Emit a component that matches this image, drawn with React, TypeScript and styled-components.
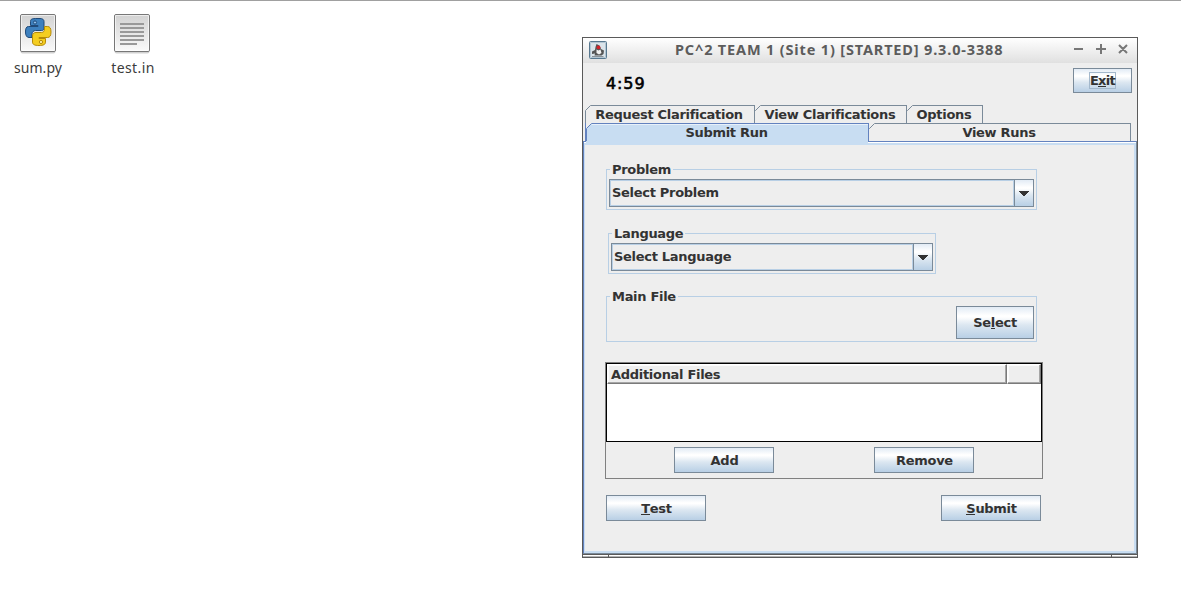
import React from 'react';
import styled, { createGlobalStyle } from 'styled-components';

const SLATE = '#7a8a99';
const BLUE = '#6382bf';
const PALE = '#c8ddf2';
const LINE = '#b8cfe5';
const PANEL = '#eeeeee';

const GlobalStyle = createGlobalStyle`
  * { box-sizing: border-box; }
  body {
    margin: 0;
    background: #fff;
    overflow: hidden;
    font: bold 13px/16px "DejaVu Sans", sans-serif;
    letter-spacing: -0.3px;
    color: #333;
  }
`;

const Desktop = styled.main`
  position: relative;
  width: 1181px;
  height: 605px;
  border-top: 1px solid #a0a0a0;
`;

const Files = styled.div`
  display: flex;
  padding-top: 12px;
`;

const FileItem = styled.div<{ $width: number }>`
  display: flex;
  flex-direction: column;
  align-items: center;
  width: ${(p) => p.$width}px;
  font: 14px/18px "Noto Sans", sans-serif;
  color: #3c3c3c;
`;

const FileIcon = styled.svg`
  display: block;
  width: 38px;
  height: 42px;
  margin-bottom: 4px;
`;

const FileName = styled.span<{ $track: number; $indent?: number }>`
  padding-left: ${(p) => p.$indent ?? 0}px;
  letter-spacing: ${(p) => p.$track}px;
  white-space: nowrap;
`;

const Frame = styled.section`
  position: absolute;
  left: 582px;
  top: 36px;
  width: 556px;
  height: 521px;
  display: flex;
  flex-direction: column;
  border: 1px solid #5a5a5a;
  background: ${PANEL};
`;

const TitleBar = styled.header`
  display: flex;
  align-items: flex-start;
  height: 25px;
  padding: 3px 8px 0 6px;
  background: linear-gradient(#fff, #e0e0e0);
`;

const Title = styled.h1`
  flex: 1;
  margin: 0;
  padding-left: 68px;
  font: bold 14.5px/16px "Noto Sans", sans-serif;
  letter-spacing: 0.84px;
  color: #5c5c5c;
  white-space: nowrap;
`;

const Controls = styled.svg`
  display: block;
  width: 56px;
  height: 12px;
  flex: none;
  margin-top: 2px;
`;

const StatusRow = styled.div`
  display: flex;
  justify-content: space-between;
  align-items: flex-start;
  height: 42px;
  padding: 5px 5px 0 23px;
`;

const Clock = styled.div`
  padding-top: 6px;
  font-size: 16px;
  font-weight: normal;
  line-height: 20px;
  letter-spacing: 0.9px;
  -webkit-text-stroke: 0.6px #000;
  color: #000;
`;

const Button = styled.button<{ $w: number; $h: number }>`
  display: flex;
  align-items: center;
  justify-content: center;
  width: ${(p) => p.$w}px;
  height: ${(p) => p.$h}px;
  padding: 0;
  border: 1px solid ${SLATE};
  border-radius: 0;
  background: linear-gradient(#e2ebf5 0%, #fff 28%, #fff 32%, #dce7f1 58%, #b8cfe5 100%);
  font: inherit;
  letter-spacing: inherit;
  color: #333;
`;

const ActionButton = styled(Button).attrs({ $w: 100, $h: 26 })`
  padding: 2px 0 0 1px;
`;

const Mnemonic = styled.span`
  display: inline-block;
  height: 13px;
  box-shadow: 0 1px 0 #333;
`;

const FocusRing = styled.span`
  display: flex;
  justify-content: center;
  width: 27px;
  height: 17px;
  line-height: 15px;
  border: 1px solid #a3b8cc;
  letter-spacing: -0.7px;
`;

const TabRow = styled.div<{ $inset: number }>`
  display: flex;
  height: 18px;
  padding-left: ${(p) => p.$inset}px;
`;

const TabBox = styled.div<{ $w: number; $active?: boolean; $first?: boolean }>`
  position: relative;
  width: ${(p) => p.$w}px;
  height: 18px;
  padding-right: ${(p) => (p.$first ? 2 : 1)}px;
  line-height: 17px;
  text-align: center;
  white-space: nowrap;
  border-top: 1px solid ${(p) => (p.$active ? BLUE : SLATE)};
  border-left: ${(p) => (p.$first ? `1px solid ${p.$active ? BLUE : SLATE}` : 'none')};
  border-right: 1px solid ${(p) => (p.$active ? BLUE : SLATE)};
  background: ${(p) => (p.$active ? PALE : PANEL)};
  box-shadow: ${(p) => (p.$active ? 'inset 0 1px 0 #e8f1fa' : 'none')};
`;

const Corner = styled.svg<{ $x: number }>`
  position: absolute;
  left: ${(p) => p.$x}px;
  top: -1px;
  width: 6px;
  height: 6px;
`;

const SecondRow = styled(TabRow)`
  background: linear-gradient(${BLUE}, ${BLUE}) 2px 0 / 1px 18px no-repeat;
`;

const PaneEdge = styled.div`
  display: flex;
  height: 413px;
  padding-top: 1px;
  border: 1px solid ${BLUE};
  border-right-color: ${SLATE};
  border-bottom-color: ${SLATE};
  background: #fff;
`;

const Pane = styled.div`
  flex: 1;
  display: flex;
  flex-direction: column;
  align-items: flex-start;
  padding: 24px 0 0 20px;
  border: solid ${PALE};
  border-width: 2px 2px 2px 1px;
  background: ${PANEL};
`;

const ActiveJoin = styled.div`
  position: absolute;
  left: -1px;
  top: 17px;
  width: 282px;
  height: 3px;
  background: ${PALE};
`;

const Group = styled.fieldset<{ $w: number; $h: number; $left: number; $gap: number }>`
  position: relative;
  display: flex;
  justify-content: flex-end;
  align-items: flex-start;
  width: ${(p) => p.$w}px;
  height: ${(p) => p.$h}px;
  margin: 0 0 ${(p) => p.$gap}px ${(p) => p.$left}px;
  padding: 9px 2px 2px;
  border: 1px solid ${LINE};
`;

const Legend = styled.span`
  position: absolute;
  left: 3px;
  top: -8px;
  padding: 0 2px;
  background: ${PANEL};
`;

const Combo = styled.div`
  display: flex;
  width: 100%;
  height: 28px;
  border: 1px solid ${SLATE};
`;

const ComboValue = styled.div`
  flex: 1;
  padding-left: 1px;
  line-height: 24px;
  border: 1px solid ${LINE};
`;

const ComboArrow = styled.div`
  display: flex;
  align-items: flex-start;
  justify-content: flex-start;
  width: 19px;
  padding: 11px 0 0 4px;
  border-left: 1px solid ${SLATE};
  background: linear-gradient(#e2ebf5 0%, #fff 28%, #fff 32%, #dce7f1 58%, #b8cfe5 100%);
`;

const FilesPanel = styled.div`
  width: 438px;
  height: 117px;
  border: 1px solid #808080;
`;

const Table = styled.div`
  height: 79px;
  border: 1px solid #000;
  background: #fff;
`;

const TableHead = styled.div`
  display: flex;
  height: 20px;
`;

const HeadCell = styled.div<{ $w: number }>`
  width: ${(p) => p.$w}px;
  padding-left: 3px;
  line-height: 19px;
  border: solid;
  border-width: 1px;
  border-color: #fff #7a7a7a #7a7a7a #fff;
  background: ${PANEL};
  box-shadow: inset -1px -1px 0 #a6a6a6, inset 1px 1px 0 #fbfbfb;
`;

const ButtonRow = styled.div<{ $pad: string; $w?: number }>`
  display: flex;
  justify-content: space-between;
  width: ${(p) => (p.$w ? `${p.$w}px` : 'auto')};
  padding: ${(p) => p.$pad};
`;

const BottomFrame = styled.footer`
  display: flex;
  justify-content: space-between;
  height: 3px;
  padding: 0 25px;
  background: linear-gradient(#5a5a5a 1px, #fff 1px, #fff 2px, #b4b4b4 2px);
`;

const Notch = styled.i`
  width: 1px;
  background: #5a5a5a;
`;

type CornerProps = { x: number; color?: string; fill?: string };

const TabCorner = ({ x, color = SLATE, fill = PANEL }: CornerProps) => (
  <Corner $x={x} viewBox="0 0 6 6">
    <path d="M0 0H6V6H0z" fill={PANEL} />
    <path d="M1 6V5L5 1H6V6z" fill={fill} />
    <path d="M0.5 6V5.5L5.5 0.5H6" fill="none" stroke={color} />
  </Corner>
);

const Select = ({ value }: { value: string }) => (
  <Combo>
    <ComboValue>{value}</ComboValue>
    <ComboArrow>
      <svg width="10" height="5" shapeRendering="crispEdges">
        <path d="M0 0h10v1h-1v1h-1v1h-1v1h-1v1h-2v-1h-1v-1h-1v-1h-1v-1h-1z" fill="#333" />
      </svg>
    </ComboArrow>
  </Combo>
);

const Sheet = ({ id }: { id: string }) => (
  <>
    <defs>
      <linearGradient id={id} x1="0" y1="0" x2="0" y2="1">
        <stop offset="0" stopColor="#d2d2d2" />
        <stop offset="1" stopColor="#fafafa" />
      </linearGradient>
    </defs>
    <rect x="1.5" y="2" width="35" height="38.5" rx="2" fill="#000" opacity=".18" />
    <rect x="1.5" y="1.5" width="35" height="37" rx="1.5" fill={`url(#${id})`} stroke="#777" />
    <path d="M2.5 2.5H35.5V37.5H2.5z" fill="none" stroke="#fff" opacity=".6" />
  </>
);

export default function App() {
  return (
    <>
      <GlobalStyle />
      <Desktop>
        <Files>
          <FileItem $width={76}>
            <FileIcon viewBox="0 0 38 42">
              <Sheet id="py" />
              <path d="M18 5.500C13 5.500 11.500 6 11.500 8.500v4H19v1H9.500C7 13.500 6.500 16 6.500 19s1 5.500 3.500 5.500h3V21c0-2 1.500-3.500 3.500-3.500h6c2 0 2.500-1 2.500-3V8.500c0-2-1.500-3-4-3z" fill="#3d80be" stroke="#204a79" />
              <path d="M25.500 13.500h3c2.500 0 3.500 2 3.500 5.500s-1 5.500-3.500 5.500H20v1h6.500V29c0 2.500-2 3.500-6.500 3.500S13.500 31.500 13.500 29v-6c0-2.500 1.500-3.500 3.500-3.500h5.500c2 0 3-1.500 3-3.500z" fill="#f4cd20" stroke="#b58a08" />
              <circle cx="16" cy="9.500" r="1.600" fill="#8fc0ee" stroke="#204a79" />
              <circle cx="22" cy="29" r="1.600" fill="#fff4b0" stroke="#b58a08" />
            </FileIcon>
            <FileName $track={0.05}>sum.py</FileName>
          </FileItem>
          <FileItem $width={112}>
            <FileIcon viewBox="0 0 38 42">
              <Sheet id="txt" />
              <path d="M7 11H31M7 15H31M7 19H31M7 23H31M7 27H31M7 31H24" stroke="#999" strokeWidth="2" />
            </FileIcon>
            <FileName $track={0.4} $indent={2}>test.in</FileName>
          </FileItem>
        </Files>

        <Frame>
          <TitleBar>
            <svg width="18" height="18" viewBox="0 0 18 18">
              <rect x=".5" y=".5" width="17" height="17" rx="1" fill="#dbe4ea" stroke="#58788f" />
              <path d="M1.500 1.500h15v15h-15z" fill="none" stroke="#b3c6d3" />
              <path d="M7.500 3L10.500 4.500L12 8L15 9.500L14.500 13L12.500 14.500H5.500L6 12.500L3 13L3 10.500L6 9L6.500 6z" fill="#555" />
              <path d="M7.500 8.500L9.500 9.500L11.500 8.500L12.500 12L10 13.500L7.500 12z" fill="#f2f2f2" />
              <circle cx="9.500" cy="6.300" r="1.900" fill="#d3222a" />
              <path d="M3 15.500H14.500" stroke="#8a9298" />
            </svg>
            <Title>PC^2 TEAM 1 (Site 1) [STARTED] 9.3.0-3388</Title>
            <Controls viewBox="0 0 56 12">
              <path d="M1 6H10M23 6H33M28 1V11M46 2L54 10M54 2L46 10" stroke="#777" strokeWidth="2" />
            </Controls>
          </TitleBar>

          <StatusRow>
            <Clock>4:59</Clock>
            <Button $w={59} $h={25}>
              <FocusRing>E<Mnemonic>x</Mnemonic>it</FocusRing>
            </Button>
          </StatusRow>

          <TabRow $inset={2}>
            <TabBox $w={170} $first>
              <TabCorner x={-1} />
              Request Clarification
            </TabBox>
            <TabBox $w={152}>
              <TabCorner x={0} />
              View Clarifications
            </TabBox>
            <TabBox $w={76}>
              <TabCorner x={0} />
              Options
            </TabBox>
          </TabRow>
          <SecondRow $inset={3}>
            <TabBox $w={283} $active $first>
              <TabCorner x={-1} color={BLUE} fill={PALE} />
              <ActiveJoin />
              Submit Run
            </TabBox>
            <TabBox $w={262}>
              <TabCorner x={0} />
              View Runs
            </TabBox>
          </SecondRow>

          <PaneEdge>
            <Pane>
              <Group $w={431} $h={41} $left={1} $gap={23}>
                <Legend>Problem</Legend>
                <Select value="Select Problem" />
              </Group>
              <Group $w={328} $h={41} $left={3} $gap={22}>
                <Legend>Language</Legend>
                <Select value="Select Language" />
              </Group>
              <Group $w={431} $h={46} $left={1} $gap={20}>
                <Legend>Main File</Legend>
                <Button $w={78} $h={33}><span>Se<Mnemonic>l</Mnemonic>ect</span></Button>
              </Group>
              <FilesPanel>
                <Table>
                  <TableHead>
                    <HeadCell $w={400}>Additional Files</HeadCell>
                    <HeadCell $w={34} />
                  </TableHead>
                </Table>
                <ButtonRow $pad="5px 68px 0">
                  <ActionButton>Add</ActionButton>
                  <ActionButton>Remove</ActionButton>
                </ButtonRow>
              </FilesPanel>
              <ButtonRow $pad="16px 0 0 1px" $w={436}>
                <ActionButton><span><Mnemonic>T</Mnemonic>est</span></ActionButton>
                <ActionButton><span><Mnemonic>S</Mnemonic>ubmit</span></ActionButton>
              </ButtonRow>
            </Pane>
          </PaneEdge>
          <BottomFrame>
            <Notch />
            <Notch />
          </BottomFrame>
        </Frame>
      </Desktop>
    </>
  );
}
